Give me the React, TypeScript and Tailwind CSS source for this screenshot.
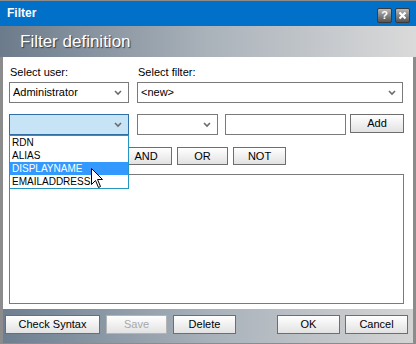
import React from 'react';

function Chevron() {
  return (
    <svg width="8" height="6" viewBox="0 0 8 6" className="shrink-0">
      <path d="M1 1 L4 4 L7 1" fill="none" stroke="#6b6b6b" strokeWidth="1.6" />
    </svg>
  );
}

function Select({ value, className }: { value?: string; className: string }) {
  return (
    <div className={`h-[21px] flex items-center justify-between pl-[3px] pr-[6px] border ${className}`}>
      <span className="truncate">{value}</span>
      <Chevron />
    </div>
  );
}

function Btn({ label, className, disabled }: { label: string; className: string; disabled?: boolean }) {
  return (
    <button
      className={`flex items-center justify-center border bg-gradient-to-b from-white to-[#e2e2e2] ${
        disabled ? 'border-[#b4b4b4] text-[#a8a8a8]' : 'border-[#6e6e6e] text-black'
      } ${className}`}
    >
      {label}
    </button>
  );
}

export default function App() {
  const items = ['RDN', 'ALIAS', 'DISPLAYNAME', 'EMAILADDRESS'];

  return (
    <div
      className="w-[416px] h-[344px] flex flex-col text-[11px] leading-[13px] text-black bg-[#8c8c8c] overflow-hidden"
      style={{ fontFamily: '"Liberation Sans", Arial, sans-serif' }}
    >
      {/* Title bar */}
      <div className="mt-px h-[25px] bg-[#0070c9] flex items-center justify-between pl-[7px] pr-[6px]">
        <span className="text-white font-bold text-[12px]">Filter</span>
        <div className="flex gap-[3px] mt-[3px]">
          <div className="w-[15px] h-[15px] rounded-[2px] border border-[#3a3a3a] bg-gradient-to-b from-[#b8b8b8] to-[#555] flex items-center justify-center text-white font-bold text-[11px]">
            ?
          </div>
          <div className="w-[15px] h-[15px] rounded-[2px] border border-[#3a3a3a] bg-gradient-to-b from-[#b8b8b8] to-[#555] flex items-center justify-center">
            <svg width="9" height="9" viewBox="0 0 9 9">
              <path d="M1.5 1.5 L7.5 7.5 M7.5 1.5 L1.5 7.5" stroke="white" strokeWidth="2.2" />
            </svg>
          </div>
        </div>
      </div>

      {/* Header */}
      <div className="h-[31px] bg-gradient-to-r from-[#6c7b8b] via-[#aab2ba] to-[#dadada] flex items-center pl-[20px]">
        <span className="text-white text-[17px] [text-shadow:1px_1px_1px_rgba(40,50,60,0.9)]">Filter definition</span>
      </div>

      {/* Body */}
      <div className="relative flex-1 bg-white mx-[3px] pl-[6px] pr-[9px] pt-[9px] flex flex-col">
        <div className="flex gap-[8px]">
          <div className="w-[120px] flex flex-col gap-[3px]">
            <span className="pl-px">Select user:</span>
            <Select value="Administrator" className="border-[#7a7a7a]" />
          </div>
          <div className="flex-1 flex flex-col gap-[3px] pr-px">
            <span className="pl-px">Select filter:</span>
            <Select value="<new>" className="border-[#7a7a7a]" />
          </div>
        </div>

        <div className="flex mt-[11px]">
          <Select className="w-[120px] bg-[#c6e4f6] border-[#2f6fa5]" />
          <Select className="w-[81px] ml-[8px] border-[#7a7a7a]" />
          <div className="w-[121px] h-[21px] ml-[7px] border border-[#7a7a7a]" />
          <Btn label="Add" className="w-[54px] h-[19px] ml-[4px]" />
        </div>

        <div className="flex gap-[5px] mt-[12px] ml-[111px]">
          <Btn label="AND" className="w-[52px] h-[18px]" />
          <Btn label="OR" className="w-[51px] h-[18px]" />
          <Btn label="NOT" className="w-[53px] h-[18px]" />
        </div>

        <div className="flex-1 mt-[9px] mb-[5px] border border-[#7a7a7a]" />

        {/* Dropdown list */}
        <div className="absolute left-[6px] top-[78px] w-[120px] bg-white border border-[#2596c3] flex flex-col text-[10px]">
          {items.map((item) => (
            <div
              key={item}
              className={`h-[13px] leading-[13px] pl-[2px] ${
                item === 'DISPLAYNAME' ? 'bg-[#3399ff] text-white' : ''
              }`}
            >
              {item}
            </div>
          ))}
        </div>

        {/* Mouse cursor */}
        <svg className="absolute left-[88px] top-[111px]" width="13" height="21" viewBox="0 0 13 21">
          <path
            d="M0.5 0.5 L0.5 16.5 L4.5 12.5 L7.5 19.5 L9.5 18.5 L6.5 11.5 L11.5 11.5 Z"
            fill="white"
            stroke="black"
            strokeWidth="1"
          />
        </svg>
      </div>

      {/* Footer */}
      <div className="h-[34px] mx-[3px] mb-px bg-gradient-to-r from-[#6e7f91] via-[#a8b1ba] to-[#d4d4d4] flex items-start pt-[6px] pl-[2px]">
        <Btn label="Check Syntax" className="w-[95px] h-[19px]" />
        <Btn label="Save" className="w-[61px] h-[19px] ml-[6px]" disabled />
        <Btn label="Delete" className="w-[63px] h-[19px] ml-[6px]" />
        <Btn label="OK" className="w-[63px] h-[19px] ml-[41px]" />
        <Btn label="Cancel" className="w-[63px] h-[19px] ml-[5px]" />
      </div>
    </div>
  );
}
